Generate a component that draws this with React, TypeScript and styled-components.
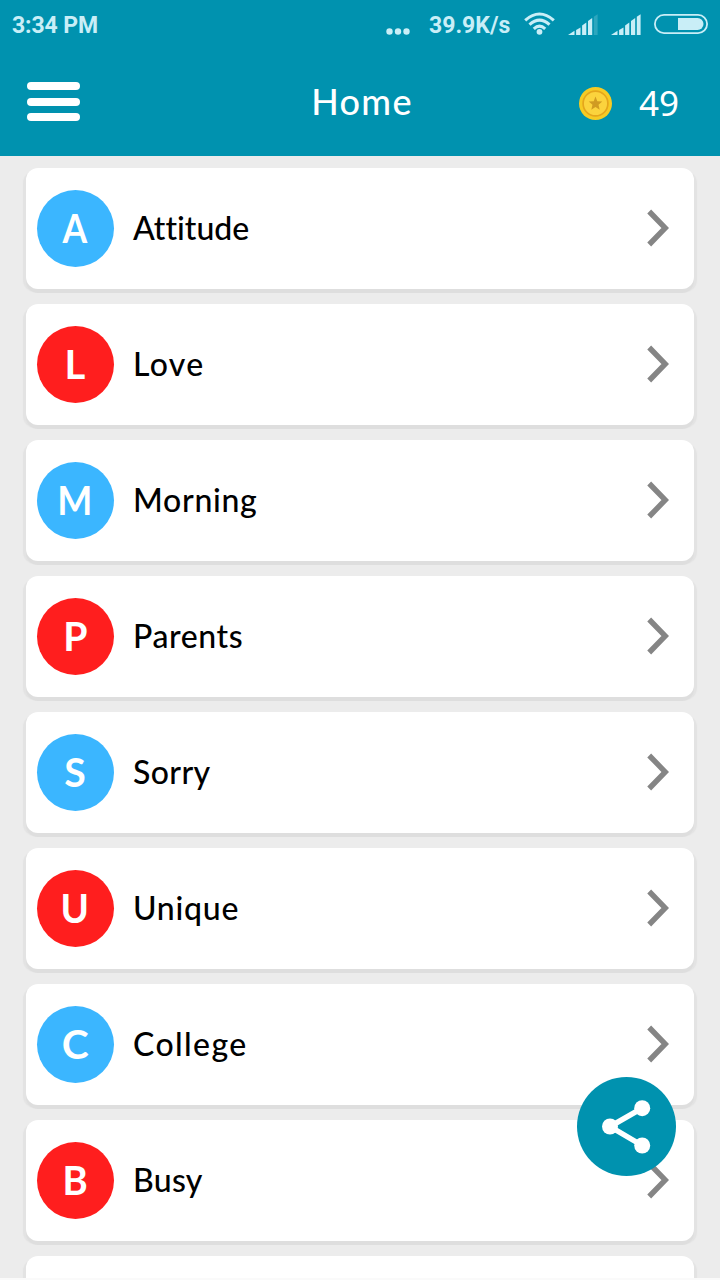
import React from 'react';
import styled, { createGlobalStyle } from 'styled-components';

const GlobalStyle = createGlobalStyle`
  * { box-sizing: border-box; }
  html, body { margin: 0; padding: 0; background: #ececec; }
  body { overflow: hidden; }
`;

const Screen = styled.div`
  position: relative;
  display: flex;
  flex-direction: column;
  width: 720px;
  height: 1280px;
  overflow: hidden;
  background: #ececec;
  border-bottom: 2px solid #fafafa;
  font-family: Lato, 'Open Sans', sans-serif;
`;

const Top = styled.header`
  flex: none;
  height: 156px;
  background: #0092af;
`;

const StatusBar = styled.div`
  display: flex;
  align-items: center;
  justify-content: space-between;
  height: 50px;
  padding: 0 12px;
  color: #c9eef7;
  font: 700 23px/50px Roboto, sans-serif;
`;

const StatusText = styled.span`
  padding-top: 2px;
  letter-spacing: -0.1px;
  white-space: nowrap;
`;

const StatusRight = styled.div`
  display: flex;
  align-items: center;
  height: 50px;
`;

const StatusIcon = styled.svg<{ $gap: number }>`
  display: block;
  flex: none;
  margin-left: ${(p) => p.$gap}px;
  fill: #c9eef7;
`;

const SpeedText = styled(StatusText)`
  width: 82px;
  margin-left: 19px;
  letter-spacing: 0;
`;

const NavBar = styled.div`
  display: grid;
  grid-template-columns: 200px 1fr 200px;
  align-items: center;
  height: 106px;
  padding: 0 41px 0 27px;
  color: #fff;
`;

const MenuButton = styled.button`
  display: flex;
  flex-direction: column;
  gap: 7.5px;
  width: 53px;
  margin-top: -3px;
  padding: 0;
  border: 0;
  background: none;
`;

const MenuLine = styled.span`
  height: 8px;
  border-radius: 4px;
  background: #fff;
`;

const Title = styled.h1`
  margin: -5px 0 0 18px;
  text-align: center;
  font-size: 36px;
  line-height: 44px;
  font-weight: 500;
  letter-spacing: 1.3px;
`;

const Coins = styled.div`
  display: flex;
  align-items: center;
  justify-content: flex-end;
  gap: 27px;
  font: 400 35px/44px 'Noto Sans', sans-serif;
`;

const List = styled.main`
  display: flex;
  flex-direction: column;
  gap: 15px;
  padding: 12px 26px 0;
`;

const Card = styled.article`
  display: flex;
  flex: none;
  align-items: center;
  height: 121px;
  padding: 0 25px 0 11px;
  border-radius: 12px;
  background: #fff;
  box-shadow: 0 4px 0 #dedede, -3px 3px 1px #e3e3e3, 3px 3px 1px #e3e3e3;
`;

const Avatar = styled.span<{ $color: string }>`
  display: flex;
  align-items: center;
  justify-content: center;
  width: 77px;
  height: 77px;
  border-radius: 50%;
  background: ${(p) => p.$color};
  color: #fff;
  font-size: 40px;
  font-weight: 700;
  line-height: 77px;
`;

const Initial = styled.span<{ $stretch: number }>`
  margin-right: 1px;
  transform: scaleX(${(p) => p.$stretch});
`;

const Label = styled.span<{ $spacing: number }>`
  flex: 1;
  margin: -2px 0 0 19px;
  color: #000;
  font-size: 32px;
  font-weight: 500;
  line-height: 40px;
  font-variant-ligatures: none;
  letter-spacing: ${(p) => p.$spacing}px;
`;

const ChevronIcon = styled.svg`
  flex: none;
  margin-top: -2px;
`;

const ShareButton = styled.button`
  position: absolute;
  left: 577px;
  top: 1077px;
  display: flex;
  width: 99px;
  height: 99px;
  padding: 0;
  border: 0;
  border-radius: 50%;
  background: #0092af;
`;

const BLUE = '#3bb6ff';
const RED = '#ff1e1e';

const categories = [
  { name: 'Attitude', color: BLUE, spacing: 0, stretch: 0.89 },
  { name: 'Love', color: RED, spacing: 1.3, stretch: 1 },
  { name: 'Morning', color: BLUE, spacing: 0.7, stretch: 0.93 },
  { name: 'Parents', color: RED, spacing: 0.6, stretch: 0.98 },
  { name: 'Sorry', color: BLUE, spacing: 0.4, stretch: 0.98 },
  { name: 'Unique', color: RED, spacing: 0.75, stretch: 0.96 },
  { name: 'College', color: BLUE, spacing: 1.4, stretch: 1.02 },
  { name: 'Busy', color: RED, spacing: 0.3, stretch: 0.96 },
];

const Dots = () => (
  <StatusIcon $gap={0} width="24" height="50" viewBox="0 0 24 50">
    <circle cx="3.5" cy="31.5" r="3.2" />
    <circle cx="12" cy="31.5" r="3.2" />
    <circle cx="20.5" cy="31.5" r="3.2" />
  </StatusIcon>
);

const Wifi = () => (
  <StatusIcon $gap={13} width="31" height="50" viewBox="0 0 31 50">
    <g fill="none" stroke="#c9eef7" strokeWidth="3.1">
      <path d="M1.2 20.3Q15.5 7.7 29.8 20.3" />
      <path d="M5.5 24.6Q15.5 15.6 25.5 24.6" />
      <path d="M9.8 28.8Q15.5 23.6 21.2 28.8" />
    </g>
    <circle cx="15.5" cy="31.8" r="2.9" />
  </StatusIcon>
);

const Signal = ({ gap, full }: { gap: number; full?: boolean }) => (
  <StatusIcon $gap={gap} width="30" height="50" viewBox="0 0 30 50">
    <path d="M0 35L6.5 30.8V35Z" />
    <path d="M8.1 30L12.5 27.5V35H8.1Z" />
    <path d="M14.1 25.5L18.3 22.5V35H14.1Z" />
    <path d="M20 21L24.2 18V35H20Z" />
    <path d="M25.8 16.8L29.6 14.3V35H25.8Z" opacity={full ? 1 : 0.22} />
  </StatusIcon>
);

const Battery = () => (
  <StatusIcon $gap={13} width="54" height="50" viewBox="0 0 54 50">
    <rect x="0.9" y="14.9" width="52.2" height="18.2" rx="9.1" fill="none" stroke="#c9eef7" strokeWidth="1.8" />
    <path d="M24 18H43.5A6 6 0 0 1 43.5 30H24Z" />
  </StatusIcon>
);

const Coin = () => (
  <svg width="33" height="33" viewBox="0 0 33 33">
    <circle cx="16.5" cy="16.5" r="16.5" fill="#f6cb24" />
    <circle cx="16.5" cy="16.5" r="12.4" fill="#fbd33d" stroke="#e5a61c" strokeWidth="1.7" />
    <path d="M16.5 9.5L18.3 14.2L23.3 14.5L19.5 17.7L20.7 22.7L16.5 20L12.3 22.7L13.5 17.7L9.7 14.5L14.7 14.2Z" fill="#d09b22" />
  </svg>
);

const Chevron = () => (
  <ChevronIcon width="22" height="38" viewBox="0 0 22 38">
    <path d="M2.2 2.5L18.3 19L2.2 35.5" fill="none" stroke="#858585" strokeWidth="5.4" />
  </ChevronIcon>
);

const ShareIcon = () => (
  <svg width="99" height="99" viewBox="0 0 99 99">
    <path d="M65.2 31.2L33 49.5L65.2 68.5" fill="none" stroke="#fff" strokeWidth="5.5" />
    <circle cx="33" cy="49.5" r="8" fill="#fff" />
    <circle cx="65.2" cy="31.2" r="8" fill="#fff" />
    <circle cx="65.2" cy="68.5" r="8" fill="#fff" />
  </svg>
);

export default function App() {
  return (
    <>
      <GlobalStyle />
      <Screen>
        <Top>
          <StatusBar>
            <StatusText>3:34 PM</StatusText>
            <StatusRight>
              <Dots />
              <SpeedText>39.9K/s</SpeedText>
              <Wifi />
              <Signal gap={13} />
              <Signal gap={13} full />
              <Battery />
            </StatusRight>
          </StatusBar>
          <NavBar>
            <MenuButton aria-label="Menu">
              <MenuLine />
              <MenuLine />
              <MenuLine />
            </MenuButton>
            <Title>Home</Title>
            <Coins>
              <Coin />
              <span>49</span>
            </Coins>
          </NavBar>
        </Top>
        <List>
          {categories.map((c) => (
            <Card key={c.name}>
              <Avatar $color={c.color}>
                <Initial $stretch={c.stretch}>{c.name[0]}</Initial>
              </Avatar>
              <Label $spacing={c.spacing}>{c.name}</Label>
              <Chevron />
            </Card>
          ))}
          <Card />
        </List>
        <ShareButton aria-label="Share">
          <ShareIcon />
        </ShareButton>
      </Screen>
    </>
  );
}
